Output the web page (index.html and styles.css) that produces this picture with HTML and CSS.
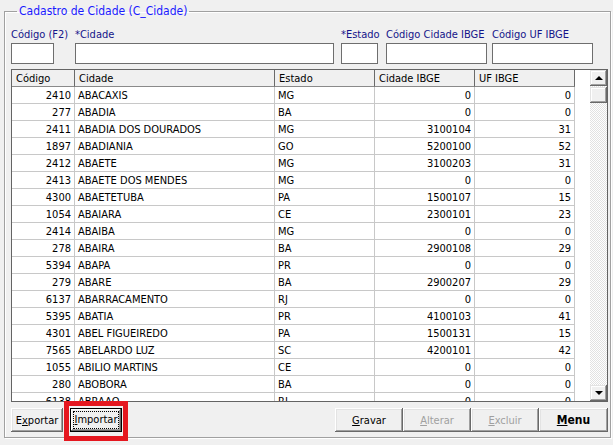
FILE: index.html
```html
<!DOCTYPE html>
<html lang="pt-BR">
<head>
<meta charset="utf-8">
<title>Cadastro de Cidade</title>
<link rel="stylesheet" href="styles.css">
</head>
<body>
<fieldset class="group">
  <legend class="group-title">Cadastro de Cidade (C_Cidade)</legend>

  <div class="fields">
    <div class="field f-codigo"><label class="lbl">Código (F2)</label><div class="input"></div></div>
    <div class="field f-cidade"><label class="lbl">*Cidade</label><div class="input"></div></div>
    <div class="field f-estado"><label class="lbl">*Estado</label><div class="input"></div></div>
    <div class="field f-ibge"><label class="lbl">Código Cidade IBGE</label><div class="input"></div></div>
    <div class="field f-uf"><label class="lbl">Código UF IBGE</label><div class="input"></div></div>
  </div>

  <div class="grid">
    <div class="grid-body">
      <div class="row head">
        <div class="c c1">Código</div><div class="c c2">Cidade</div><div class="c c3">Estado</div><div class="c c4">Cidade IBGE</div><div class="c c5">UF IBGE</div>
      </div>
      <div class="row"><div class="c c1 n">2410</div><div class="c c2">ABACAXIS</div><div class="c c3">MG</div><div class="c c4 n">0</div><div class="c c5 n">0</div></div>
      <div class="row"><div class="c c1 n">277</div><div class="c c2">ABADIA</div><div class="c c3">BA</div><div class="c c4 n">0</div><div class="c c5 n">0</div></div>
      <div class="row"><div class="c c1 n">2411</div><div class="c c2">ABADIA DOS DOURADOS</div><div class="c c3">MG</div><div class="c c4 n">3100104</div><div class="c c5 n">31</div></div>
      <div class="row"><div class="c c1 n">1897</div><div class="c c2">ABADIANIA</div><div class="c c3">GO</div><div class="c c4 n">5200100</div><div class="c c5 n">52</div></div>
      <div class="row"><div class="c c1 n">2412</div><div class="c c2">ABAETE</div><div class="c c3">MG</div><div class="c c4 n">3100203</div><div class="c c5 n">31</div></div>
      <div class="row"><div class="c c1 n">2413</div><div class="c c2">ABAETE DOS MENDES</div><div class="c c3">MG</div><div class="c c4 n">0</div><div class="c c5 n">0</div></div>
      <div class="row"><div class="c c1 n">4300</div><div class="c c2">ABAETETUBA</div><div class="c c3">PA</div><div class="c c4 n">1500107</div><div class="c c5 n">15</div></div>
      <div class="row"><div class="c c1 n">1054</div><div class="c c2">ABAIARA</div><div class="c c3">CE</div><div class="c c4 n">2300101</div><div class="c c5 n">23</div></div>
      <div class="row"><div class="c c1 n">2414</div><div class="c c2">ABAIBA</div><div class="c c3">MG</div><div class="c c4 n">0</div><div class="c c5 n">0</div></div>
      <div class="row"><div class="c c1 n">278</div><div class="c c2">ABAIRA</div><div class="c c3">BA</div><div class="c c4 n">2900108</div><div class="c c5 n">29</div></div>
      <div class="row"><div class="c c1 n">5394</div><div class="c c2">ABAPA</div><div class="c c3">PR</div><div class="c c4 n">0</div><div class="c c5 n">0</div></div>
      <div class="row"><div class="c c1 n">279</div><div class="c c2">ABARE</div><div class="c c3">BA</div><div class="c c4 n">2900207</div><div class="c c5 n">29</div></div>
      <div class="row"><div class="c c1 n">6137</div><div class="c c2">ABARRACAMENTO</div><div class="c c3">RJ</div><div class="c c4 n">0</div><div class="c c5 n">0</div></div>
      <div class="row"><div class="c c1 n">5395</div><div class="c c2">ABATIA</div><div class="c c3">PR</div><div class="c c4 n">4100103</div><div class="c c5 n">41</div></div>
      <div class="row"><div class="c c1 n">4301</div><div class="c c2">ABEL FIGUEIREDO</div><div class="c c3">PA</div><div class="c c4 n">1500131</div><div class="c c5 n">15</div></div>
      <div class="row"><div class="c c1 n">7565</div><div class="c c2">ABELARDO LUZ</div><div class="c c3">SC</div><div class="c c4 n">4200101</div><div class="c c5 n">42</div></div>
      <div class="row"><div class="c c1 n">1055</div><div class="c c2">ABILIO MARTINS</div><div class="c c3">CE</div><div class="c c4 n">0</div><div class="c c5 n">0</div></div>
      <div class="row"><div class="c c1 n">280</div><div class="c c2">ABOBORA</div><div class="c c3">BA</div><div class="c c4 n">0</div><div class="c c5 n">0</div></div>
      <div class="row"><div class="c c1 n">6138</div><div class="c c2">ABRAAO</div><div class="c c3">RJ</div><div class="c c4 n">0</div><div class="c c5 n">0</div></div>
    </div>
    <div class="scrollbar">
      <div class="sb-btn sb-up"></div>
      <div class="sb-thumb"></div>
      <div class="sb-btn sb-down"></div>
    </div>
  </div>

  <div class="actions">
    <div class="actions-left">
      <button class="btn btn-small">E<u>x</u>portar</button>
      <div class="mark-wrap">
        <button class="btn btn-small btn-default"><span class="focus"><u>I</u>mportar</span></button>
        <span class="mark"></span>
      </div>
    </div>
    <div class="actions-right">
      <button class="btn btn-wide"><u>G</u>ravar</button>
      <button class="btn btn-wide" disabled><u>A</u>lterar</button>
      <button class="btn btn-wide" disabled><u>E</u>xcluir</button>
      <button class="btn btn-wide btn-last btn-bold"><u>M</u>enu</button>
    </div>
  </div>
</fieldset>
</body>
</html>
```

FILE: styles.css
```css
html, body {
  margin: 0;
  padding: 0;
}
body {
  width: 613px;
  height: 445px;
  overflow: hidden;
  background: #f0f0f0;
  font-family: "DejaVu Sans Condensed", "Liberation Sans", sans-serif;
  font-size: 11px;
  color: #000;
}

.group {
  box-sizing: border-box;
  width: 607px;
  margin: 4px 0 0 4px;
  padding: 9px 2px 5px 6px;
  border: 1px solid #a0a0a0;
  box-shadow: inset 1px 1px 0 #fff, 1px 1px 0 #fff;
  min-inline-size: 0;
}
.group-title {
  margin-left: 6px;
  padding: 0 2px;
  font-size: 12px;
  line-height: 14px;
  color: #1a1aff;
}

/* fields */
.fields {
  display: flex;
  align-items: flex-end;
}
.field {
  display: flex;
  flex-direction: column;
  flex: none;
}
.lbl {
  line-height: 15px;
  color: #14148a;
  white-space: nowrap;
}
.input {
  box-sizing: border-box;
  height: 21px;
  margin-top: 1px;
  background: #fff;
  border: 1px solid #6e6e6e;
}
.f-codigo { width: 43px; }
.f-cidade { width: 259px; margin-left: 21px; }
.f-estado { width: 37px; margin-left: 7px; }
.f-ibge { width: 101px; margin-left: 8px; }
.f-uf { width: 101px; margin-left: 5px; }

/* grid */
.grid {
  box-sizing: border-box;
  display: flex;
  height: 333px;
  margin-top: 5px;
  background: #fff;
  border: 1px solid #646464;
}
.grid-body {
  flex: 1;
  overflow: hidden;
}
.row {
  display: flex;
  height: 17px;
}
.c {
  box-sizing: border-box;
  flex: none;
  height: 17px;
  padding: 1px 3px 0;
  line-height: 16px;
  white-space: nowrap;
  overflow: hidden;
  border-right: 1px solid #c8c8c8;
  border-bottom: 1px solid #c8c8c8;
}
.c1 { width: 63px; }
.c2 { width: 200px; }
.c3 { width: 100px; }
.c4 { width: 100px; }
.c5 { width: 100px; }
.n { text-align: right; }

.head .c {
  background: #f0f0f0;
  border-right-color: #6a6a6a;
  border-bottom-color: #8a8a8a;
  padding-left: 4px;
}

/* scrollbar */
.scrollbar {
  display: flex;
  flex-direction: column;
  width: 17px;
  flex: none;
  background-color: #fff;
  background-image: conic-gradient(#fff 25%, #e2e2e2 0 50%, #fff 0 75%, #e2e2e2 0);
  background-size: 2px 2px;
}
.sb-btn,
.sb-thumb {
  box-sizing: border-box;
  height: 16px;
  background: #f0f0f0;
  box-shadow: inset -1px -1px 0 #696969, inset 1px 1px 0 #e3e3e3, inset -2px -2px 0 #a0a0a0, inset 2px 2px 0 #fff;
  display: flex;
  align-items: center;
  justify-content: center;
}
.sb-thumb {
  margin-top: 1px;
}
.sb-down {
  margin-top: auto;
}
.sb-up::before,
.sb-down::before {
  content: "";
  width: 0;
  height: 0;
  border-left: 4px solid transparent;
  border-right: 4px solid transparent;
}
.sb-up::before {
  border-bottom: 4px solid #000;
  margin-top: -1px;
}
.sb-down::before {
  border-top: 4px solid #000;
}

/* actions */
.actions {
  display: flex;
  justify-content: space-between;
  margin-top: 6px;
}
.actions-left,
.actions-right {
  display: flex;
}
.btn {
  box-sizing: border-box;
  height: 24px;
  margin: 0;
  padding: 0;
  border: none;
  background: #f0f0f0;
  box-shadow: inset -1px -1px 0 #696969, inset 1px 1px 0 #fff, inset -2px -2px 0 #a0a0a0, inset 2px 2px 0 #e3e3e3;
  font-family: inherit;
  font-size: 11px;
  color: #000;
}
.btn:disabled {
  color: #a0a0a0;
}
.btn-small {
  width: 52px;
}
.btn-wide {
  width: 68px;
}
.btn-last {
  width: 69px;
}
.btn-bold {
  font-weight: bold;
  font-size: 12px;
}
.btn-default {
  box-shadow: inset 0 0 0 1px #000, inset -2px -2px 0 #696969, inset 2px 2px 0 #fff, inset -3px -3px 0 #a0a0a0;
}
.focus {
  display: inline-block;
  padding: 1px 1px 2px;
  outline: 1px dotted #000;
  outline-offset: 0;
}

.mark-wrap {
  position: relative;
  margin-left: 7px;
}
.mark {
  position: absolute;
  top: -7px;
  left: -6px;
  right: -6px;
  bottom: -9px;
  border: 5px solid #e5171f;
  pointer-events: none;
}
```
